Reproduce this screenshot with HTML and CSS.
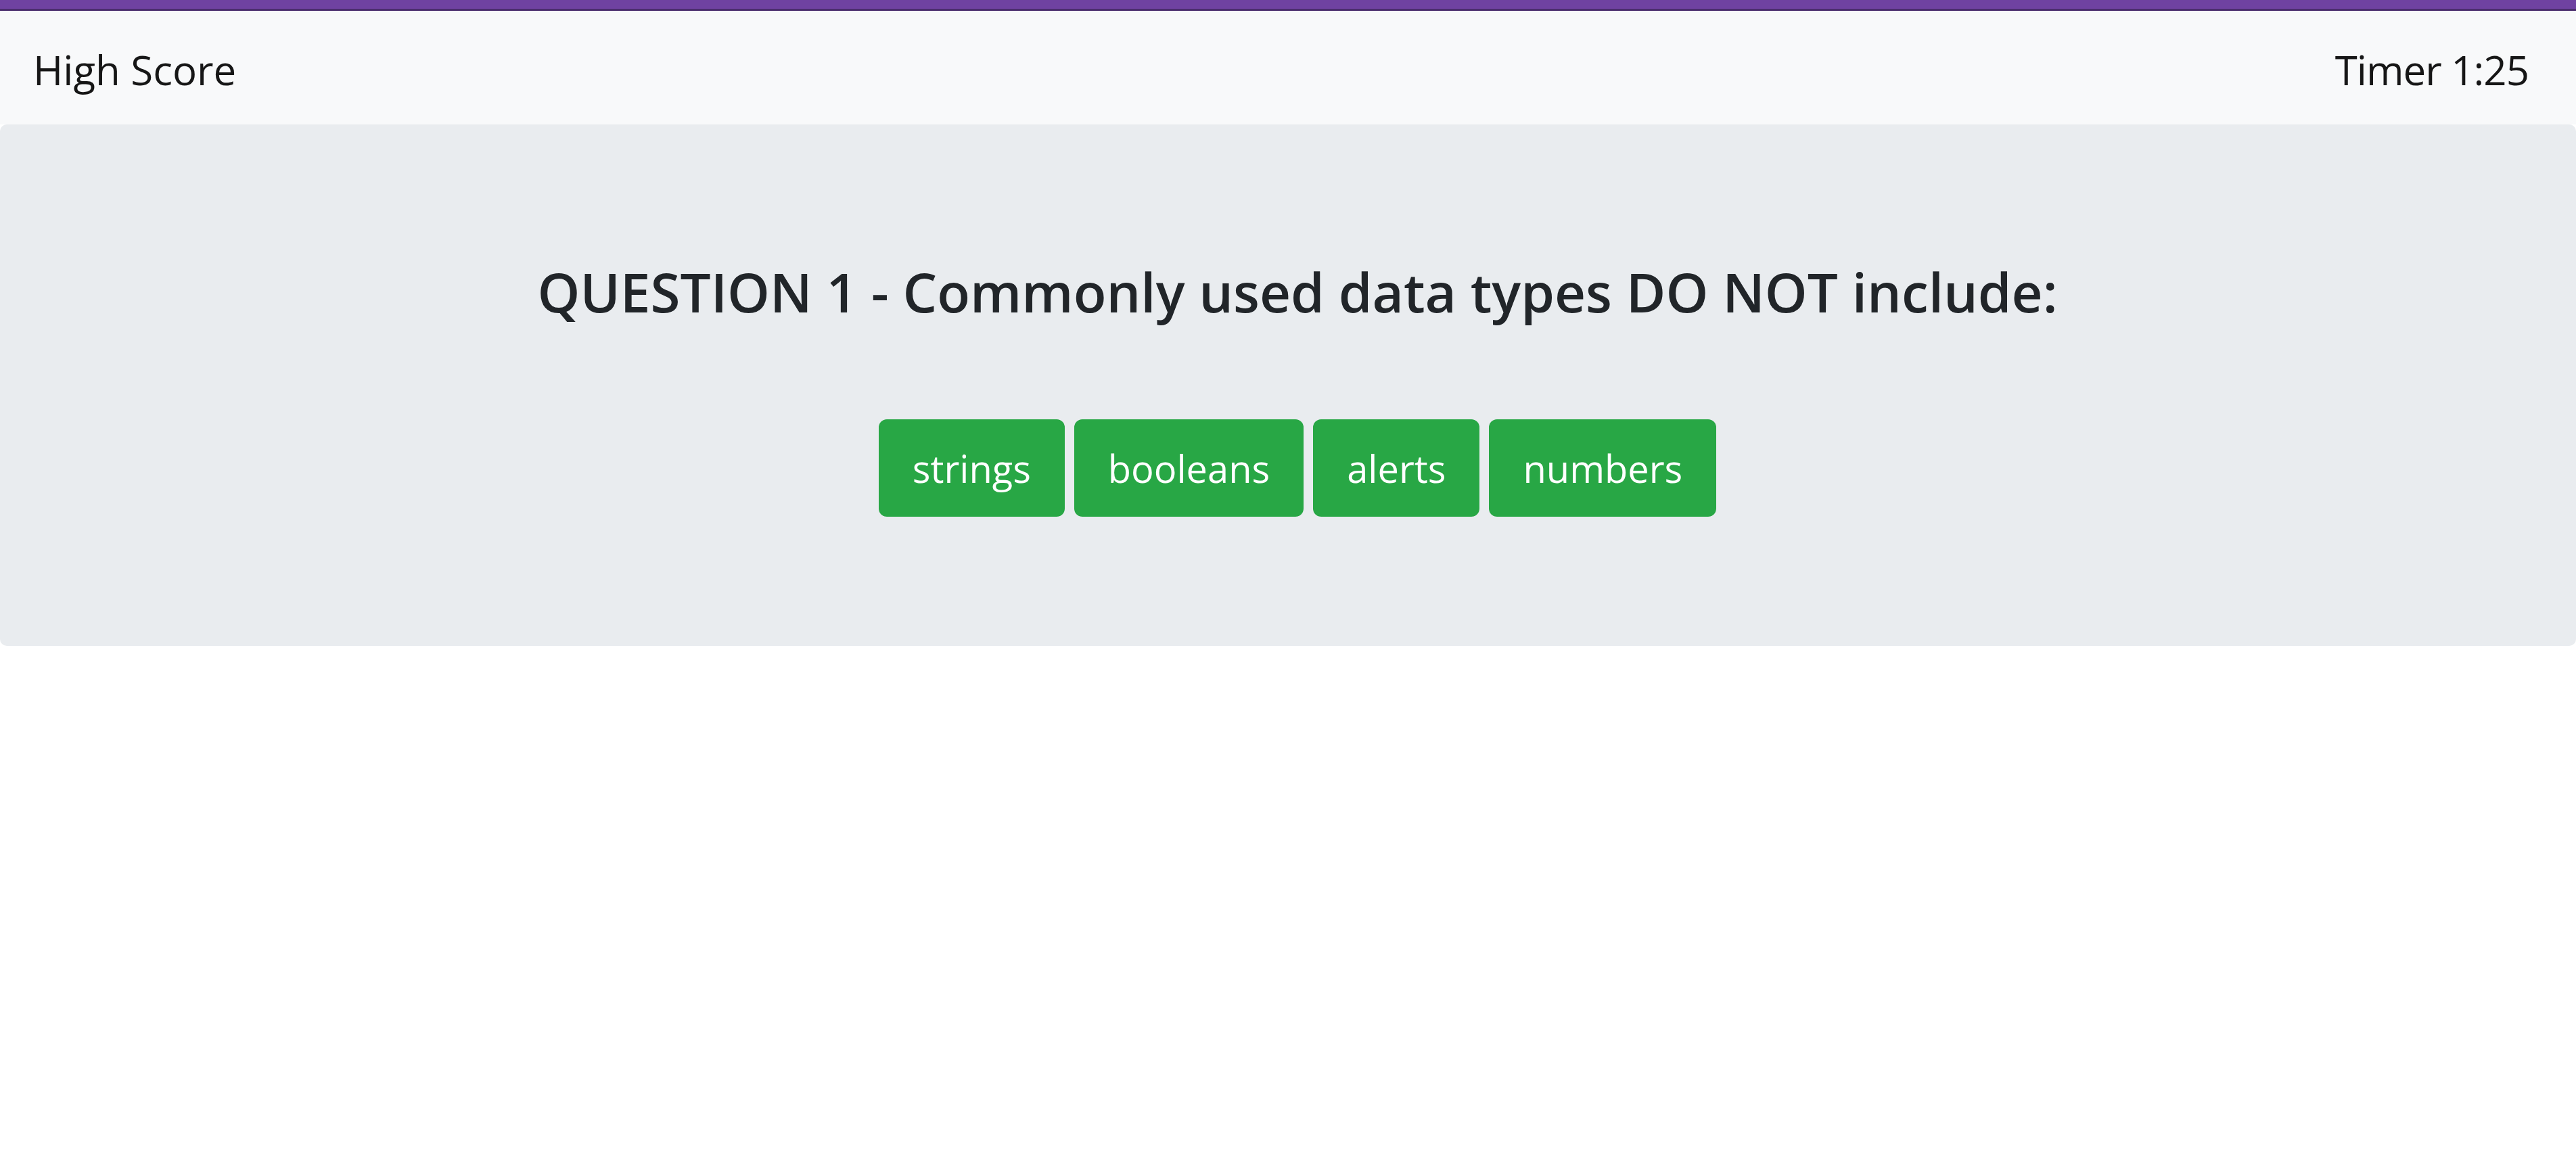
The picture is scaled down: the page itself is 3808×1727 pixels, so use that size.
FILE: index.html
```html
<!DOCTYPE html>
<html>
<head>
<meta charset="utf-8">
<link rel="stylesheet" href="styles.css">
</head>
<body>
<div class="topbar"></div>
<nav class="navbar">
  <span class="brand">High Score</span>
  <span class="timer">Timer 1:25</span>
</nav>
<main class="jumbotron">
  <h3 class="question">QUESTION 1 - Commonly used data types DO NOT include:</h3>
  <div class="answers">
    <button class="btn">strings</button>
    <button class="btn">booleans</button>
    <button class="btn">alerts</button>
    <button class="btn">numbers</button>
  </div>
</main>
</body>
</html>
```

FILE: styles.css
```css
html, body {
  margin: 0;
  padding: 0;
  background: #ffffff;
  font-family: "Open Sans", "Noto Sans", sans-serif;
  color: #212529;
}

.topbar {
  height: 13px;
  background: #6f42a1;
  border-bottom: 3px solid #4a2d6d;
}

.navbar {
  height: 168px;
  box-sizing: border-box;
  display: flex;
  align-items: center;
  justify-content: space-between;
  padding: 6px 70px 0 49px;
  background: #f8f9fa;
  font-size: 60px;
  font-weight: 500;
  color: #161616;
}

.timer {
  letter-spacing: -1px;
}

.jumbotron {
  height: 771px;
  box-sizing: border-box;
  background: #e9ecef;
  border-radius: 10px;
  text-align: center;
  padding: 199px 0 0 28px;
}

.question {
  margin: 0;
  font-size: 80px;
  font-weight: 600;
  line-height: 1.2;
}

.answers {
  display: flex;
  justify-content: center;
  gap: 14px;
  margin-top: 141px;
}

.btn {
  height: 144px;
  padding: 0 50px;
  border: none;
  border-radius: 12px;
  background: #28a745;
  color: #ffffff;
  font-family: "Open Sans", "Noto Sans", sans-serif;
  font-size: 56px;
}
```
